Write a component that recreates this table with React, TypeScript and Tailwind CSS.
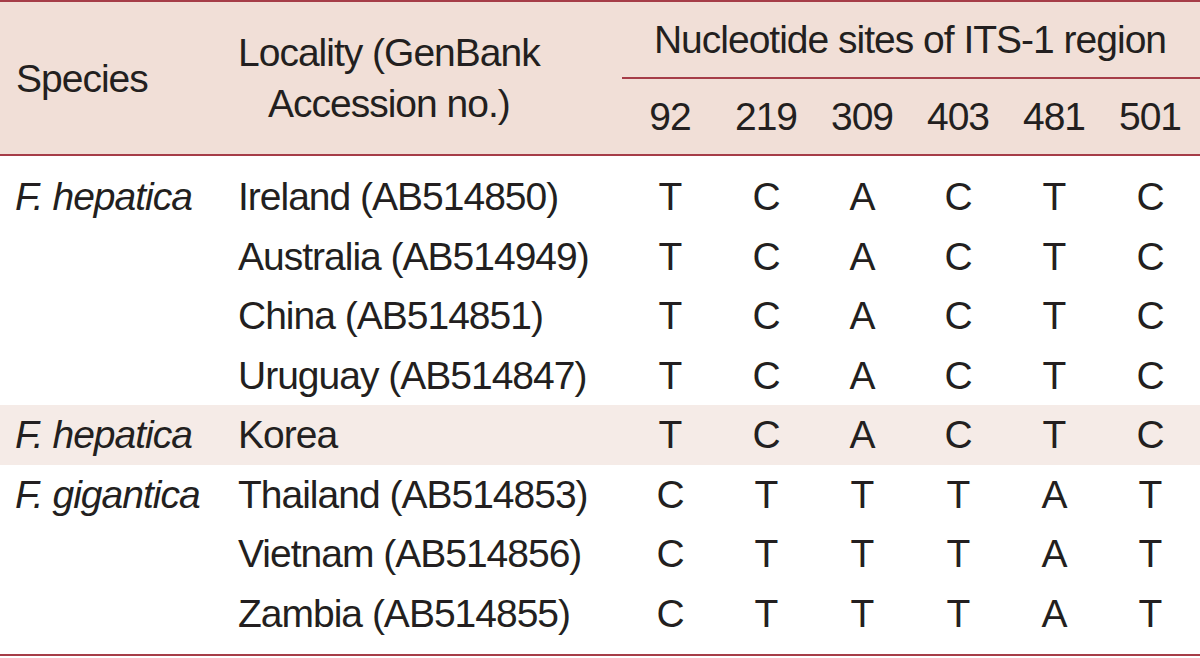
import React from "react";

const rows: { sp: string; loc: string; v: string[]; hl?: boolean }[] = [
  { sp: "F. hepatica", loc: "Ireland (AB514850)", v: ["T", "C", "A", "C", "T", "C"] },
  { sp: "", loc: "Australia (AB514949)", v: ["T", "C", "A", "C", "T", "C"] },
  { sp: "", loc: "China (AB514851)", v: ["T", "C", "A", "C", "T", "C"] },
  { sp: "", loc: "Uruguay (AB514847)", v: ["T", "C", "A", "C", "T", "C"] },
  { sp: "F. hepatica", loc: "Korea", v: ["T", "C", "A", "C", "T", "C"], hl: true },
  { sp: "F. gigantica", loc: "Thailand (AB514853)", v: ["C", "T", "T", "T", "A", "T"] },
  { sp: "", loc: "Vietnam (AB514856)", v: ["C", "T", "T", "T", "A", "T"] },
  { sp: "", loc: "Zambia (AB514855)", v: ["C", "T", "T", "T", "A", "T"] },
];

const sites = ["92", "219", "309", "403", "481", "501"];

export default function App() {
  return (
    <div
      className="w-[1200px] h-[658px] bg-white text-[#231f20] text-[39px] tracking-[-1px] leading-none overflow-hidden"
      style={{ fontFamily: '"Liberation Sans", Arial, sans-serif' }}
    >
      <div className="border-t-2 border-b-2 border-[#a63d48] bg-[#f1dfd7] flex h-[156px]">
        <div className="w-[238px] pl-[16px] flex items-center">Species</div>
        <div className="w-[384px] flex items-center">
          <div className="text-center leading-[51px]">
            Locality (GenBank
            <br />
            Accession no.)
          </div>
        </div>
        <div className="flex-1 flex flex-col">
          <div className="h-[75px] flex items-center">
            <div className="w-[576px] text-center">Nucleotide sites of ITS-1 region</div>
          </div>
          <div className="h-[2px] bg-[#a63d48]" />
          <div className="flex-1 flex items-center">
            {sites.map((s) => (
              <div key={s} className="w-[96px] text-center">
                {s}
              </div>
            ))}
          </div>
        </div>
      </div>
      <div className="py-[11px] border-b-2 border-[#a63d48]">
        {rows.map((r, i) => (
          <div
            key={i}
            className={`flex items-center h-[59.5px] ${r.hl ? "bg-[#f5ebe7]" : ""}`}
          >
            <div className="w-[238px] pl-[15px] italic">{r.sp}</div>
            <div className="w-[384px]">{r.loc}</div>
            {r.v.map((c, j) => (
              <div key={j} className="w-[96px] text-center">
                {c}
              </div>
            ))}
          </div>
        ))}
      </div>
    </div>
  );
}
